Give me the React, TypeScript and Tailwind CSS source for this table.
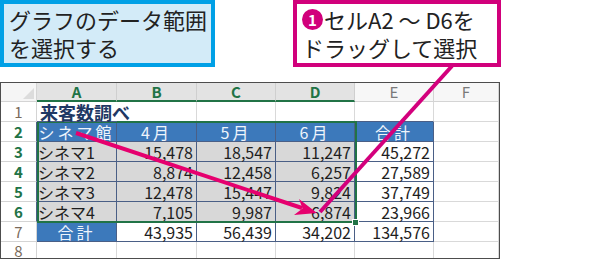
import React from 'react';

type Cell = {
  text?: string;
  align?: 'left' | 'right' | 'center';
  kind?: 'head' | 'gray' | 'white' | 'plain' | 'title';
};

const font = "font-['Noto_Sans_CJK_JP','Noto_Sans',sans-serif]";

const tableRows: Cell[][] = [
  [
    { text: '来客数調べ', kind: 'title' },
    { kind: 'plain' },
    { kind: 'plain' },
    { kind: 'plain' },
    { kind: 'plain' },
    { kind: 'plain' },
  ],
  [
    { text: 'シネマ館', kind: 'head', align: 'center' },
    { text: '4月', kind: 'head', align: 'center' },
    { text: '5月', kind: 'head', align: 'center' },
    { text: '6月', kind: 'head', align: 'center' },
    { text: '合計', kind: 'head', align: 'center' },
    { kind: 'plain' },
  ],
  [
    { text: 'シネマ1', kind: 'gray' },
    { text: '15,478', kind: 'gray', align: 'right' },
    { text: '18,547', kind: 'gray', align: 'right' },
    { text: '11,247', kind: 'gray', align: 'right' },
    { text: '45,272', kind: 'white', align: 'right' },
    { kind: 'plain' },
  ],
  [
    { text: 'シネマ2', kind: 'gray' },
    { text: '8,874', kind: 'gray', align: 'right' },
    { text: '12,458', kind: 'gray', align: 'right' },
    { text: '6,257', kind: 'gray', align: 'right' },
    { text: '27,589', kind: 'white', align: 'right' },
    { kind: 'plain' },
  ],
  [
    { text: 'シネマ3', kind: 'gray' },
    { text: '12,478', kind: 'gray', align: 'right' },
    { text: '15,447', kind: 'gray', align: 'right' },
    { text: '9,824', kind: 'gray', align: 'right' },
    { text: '37,749', kind: 'white', align: 'right' },
    { kind: 'plain' },
  ],
  [
    { text: 'シネマ4', kind: 'gray' },
    { text: '7,105', kind: 'gray', align: 'right' },
    { text: '9,987', kind: 'gray', align: 'right' },
    { text: '6,874', kind: 'gray', align: 'right' },
    { text: '23,966', kind: 'white', align: 'right' },
    { kind: 'plain' },
  ],
  [
    { text: '合計', kind: 'head', align: 'center' },
    { text: '43,935', kind: 'white', align: 'right' },
    { text: '56,439', kind: 'white', align: 'right' },
    { text: '34,202', kind: 'white', align: 'right' },
    { text: '134,576', kind: 'white', align: 'right' },
    { kind: 'plain' },
  ],
  [
    { kind: 'plain' },
    { kind: 'plain' },
    { kind: 'plain' },
    { kind: 'plain' },
    { kind: 'plain' },
    { kind: 'plain' },
  ],
];

const columns = ['A', 'B', 'C', 'D', 'E', 'F'];

function cellClass(cell: Cell, row: number, col: number) {
  const inTable = row >= 1 && row <= 6 && col <= 4;
  const aboveTable = row === 0 && col <= 4;
  let border = 'border-r border-b border-[#d9d9d9]';
  if (inTable) border = 'border-r border-b border-[#4a5f86]';
  else if (aboveTable) border = 'border-r border-b border-r-[#d9d9d9] border-b-[#4a5f86]';

  let bg = 'bg-white text-[#1e1e1e]';
  if (cell.kind === 'head') bg = 'bg-[#3c79bb] text-[#eef4fb]';
  if (cell.kind === 'gray') bg = 'bg-[#d8d8d8] text-[#1e1e1e]';

  const align =
    cell.align === 'right'
      ? 'justify-end pr-[3px]'
      : cell.align === 'center'
        ? 'justify-center tracking-[3px]'
        : 'justify-start pl-[1px]';

  return `flex items-center whitespace-nowrap ${border} ${bg} ${align}`;
}

function Sheet() {
  return (
    <div className="relative w-[500px] h-[177px] border border-[#4d4d4d] overflow-hidden">
      <div className="grid grid-cols-[36px_80px_80px_79px_79px_79px_1fr] grid-rows-[19px_20px_20px_20px_20px_20px_20px_20px_1fr] h-full text-[16px] leading-[18px]">
        <div className="relative bg-[#f5f5f5] border-r border-b border-[#d4d4d4]">
          <div className="absolute right-[2px] bottom-[2px] w-0 h-0 border-l-[11px] border-l-transparent border-b-[11px] border-b-[#dcdcdc]" />
        </div>
        {columns.map((c, i) => (
          <div
            key={c}
            className={
              i < 4
                ? 'flex items-center justify-center bg-[#e3e3e3] border-r border-[#cfcfcf] border-b-2 border-b-[#217346] text-[#217346] font-bold text-[15px]'
                : 'flex items-center justify-center bg-[#f7f7f7] border-r border-b border-[#d4d4d4] text-[#7a7a7a] text-[15px]'
            }
          >
            {c}
          </div>
        ))}
        {tableRows.map((row, r) => (
          <React.Fragment key={r}>
            <div
              className={
                r >= 1 && r <= 5
                  ? 'flex items-center justify-center bg-white border-r border-b border-[#d4d4d4] border-r-[#4a5f86] text-[#217346] font-bold text-[15px]'
                  : 'flex items-center justify-center bg-white border-r border-b border-[#d4d4d4] text-[#7a6a5a] text-[15px]'
              }
            >
              {r + 1}
            </div>
            {row.map((cell, c) =>
              cell.kind === 'title' ? (
                <div key={c} className="relative z-10 flex items-center pl-[3px] bg-white border-b border-[#4a5f86] whitespace-nowrap overflow-visible">
                  <span className="text-[18px] font-bold text-[#1f3864]">{cell.text}</span>
                </div>
              ) : (
                <div key={c} className={cellClass(cell, r, c)}>
                  {cell.text}
                </div>
              )
            )}
          </React.Fragment>
        ))}
      </div>
      {/* selection A2:D6 */}
      <div className="absolute left-[36px] top-[38px] w-[320px] h-[102px] border-2 border-[#217346] pointer-events-none" />
      <div className="absolute left-[351px] top-[136px] w-[7px] h-[7px] bg-[#217346] border border-white pointer-events-none" />
    </div>
  );
}

export default function App() {
  return (
    <div className={`relative w-[600px] h-[260px] bg-white overflow-hidden ${font}`}>
      <div className="flex h-[67px]">
        <div className="w-[215px] h-[67px] border-4 border-[#00a0e6] bg-[#d3ebf8] pl-[5px] pt-[1px] text-[22px] leading-[28px] text-[#222] whitespace-nowrap">
          <div>グラフのデータ範囲</div>
          <div>を選択する</div>
        </div>
        <div className="ml-[78px] w-[208px] h-[67px] border-4 border-[#d1007b] bg-white pl-[5px] pt-[1px] text-[22px] leading-[28px] text-[#222] whitespace-nowrap">
          <div className="flex items-center">
            <span className="inline-flex items-center justify-center w-[21px] h-[21px] rounded-full bg-[#d1007b] text-white text-[15px] font-bold leading-none mr-[1px]">1</span>
            <span>セルA2 ～ D6を</span>
          </div>
          <div>ドラッグして選択</div>
        </div>
      </div>
      <div className="mt-[15px]">
        <Sheet />
      </div>
      <svg className="absolute inset-0 pointer-events-none" width="600" height="260" viewBox="0 0 600 260">
        <line x1="452" y1="66" x2="320" y2="212" stroke="#d3007c" strokeWidth="4" />
        <line x1="76" y1="133" x2="302" y2="208" stroke="#e6006e" strokeWidth="4" />
        <polygon points="317,213 294,215 302.5,208.5 299,199" fill="#e6006e" />
      </svg>
    </div>
  );
}
